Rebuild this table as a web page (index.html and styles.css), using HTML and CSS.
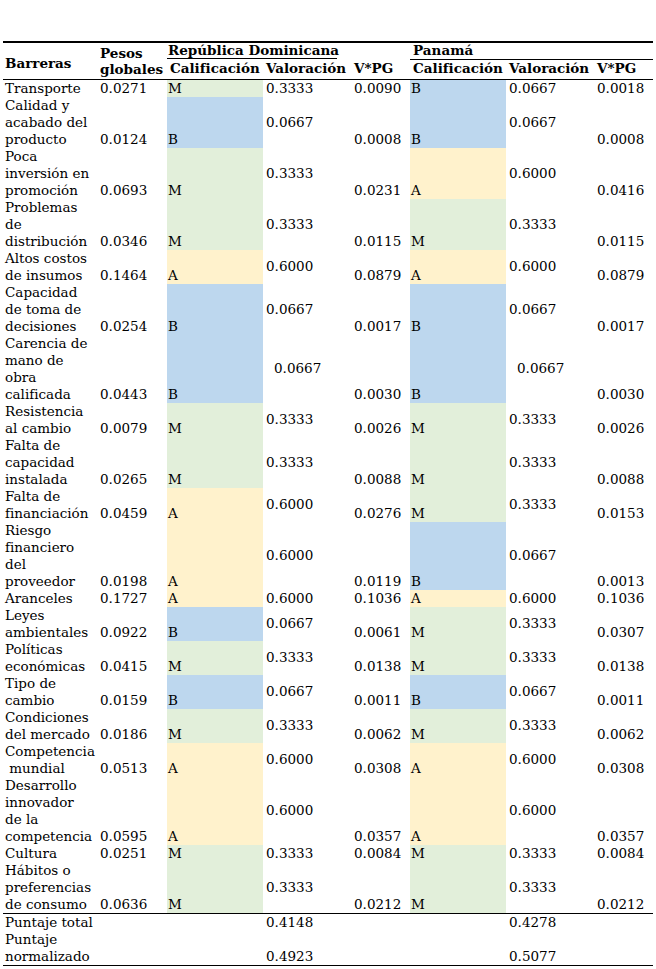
FILE: index.html
```html
<!DOCTYPE html>
<html lang="es">
<head>
<meta charset="utf-8">
<title>Barreras</title>
<link rel="stylesheet" href="styles.css">
</head>
<body>
<table class="tbl">
  <colgroup>
    <col class="c-bar"><col class="c-peso"><col class="c-cal"><col class="c-val"><col class="c-vpg"><col class="c-cal"><col class="c-val"><col class="c-vpg">
  </colgroup>
  <thead>
    <tr class="h1">
      <th rowspan="2" class="th-bar">Barreras</th>
      <th rowspan="2" class="th-peso">Pesos<br>globales</th>
      <th colspan="3" class="th-country"><span class="rd">República Dominicana</span></th>
      <th colspan="3" class="th-country pa">Panamá</th>
    </tr>
    <tr class="h2">
      <th class="th-cal">Calificación</th>
      <th>Valoración</th>
      <th>V*PG</th>
      <th class="th-cal">Calificación</th>
      <th>Valoración</th>
      <th>V*PG</th>
    </tr>
  </thead>
  <tbody>
    <tr><td class="bar">Transporte</td><td>0.0271</td><td class="cal m">M</td><td class="val">0.3333</td><td>0.0090</td><td class="cal b">B</td><td class="val">0.0667</td><td>0.0018</td></tr>
    <tr><td class="bar">Calidad y<br>acabado del<br>producto</td><td>0.0124</td><td class="cal b">B</td><td class="val">0.0667</td><td>0.0008</td><td class="cal b">B</td><td class="val">0.0667</td><td>0.0008</td></tr>
    <tr><td class="bar">Poca<br>inversión en<br>promoción</td><td>0.0693</td><td class="cal m">M</td><td class="val">0.3333</td><td>0.0231</td><td class="cal a">A</td><td class="val">0.6000</td><td>0.0416</td></tr>
    <tr><td class="bar">Problemas<br>de<br>distribución</td><td>0.0346</td><td class="cal m">M</td><td class="val">0.3333</td><td>0.0115</td><td class="cal m">M</td><td class="val">0.3333</td><td>0.0115</td></tr>
    <tr><td class="bar">Altos costos<br>de insumos</td><td>0.1464</td><td class="cal a">A</td><td class="val">0.6000</td><td>0.0879</td><td class="cal a">A</td><td class="val">0.6000</td><td>0.0879</td></tr>
    <tr><td class="bar">Capacidad<br>de toma de<br>decisiones</td><td>0.0254</td><td class="cal b">B</td><td class="val">0.0667</td><td>0.0017</td><td class="cal b">B</td><td class="val">0.0667</td><td>0.0017</td></tr>
    <tr><td class="bar">Carencia de<br>mano de<br>obra<br>calificada</td><td>0.0443</td><td class="cal b">B</td><td class="val indent">0.0667</td><td>0.0030</td><td class="cal b">B</td><td class="val indent">0.0667</td><td>0.0030</td></tr>
    <tr><td class="bar">Resistencia<br>al cambio</td><td>0.0079</td><td class="cal m">M</td><td class="val">0.3333</td><td>0.0026</td><td class="cal m">M</td><td class="val">0.3333</td><td>0.0026</td></tr>
    <tr><td class="bar">Falta de<br>capacidad<br>instalada</td><td>0.0265</td><td class="cal m">M</td><td class="val">0.3333</td><td>0.0088</td><td class="cal m">M</td><td class="val">0.3333</td><td>0.0088</td></tr>
    <tr><td class="bar">Falta de<br>financiación</td><td>0.0459</td><td class="cal a">A</td><td class="val">0.6000</td><td>0.0276</td><td class="cal m">M</td><td class="val">0.3333</td><td>0.0153</td></tr>
    <tr><td class="bar">Riesgo<br>financiero<br>del<br>proveedor</td><td>0.0198</td><td class="cal a">A</td><td class="val">0.6000</td><td>0.0119</td><td class="cal b">B</td><td class="val">0.0667</td><td>0.0013</td></tr>
    <tr><td class="bar">Aranceles</td><td>0.1727</td><td class="cal a">A</td><td class="val">0.6000</td><td>0.1036</td><td class="cal a">A</td><td class="val">0.6000</td><td>0.1036</td></tr>
    <tr><td class="bar">Leyes<br>ambientales</td><td>0.0922</td><td class="cal b">B</td><td class="val">0.0667</td><td>0.0061</td><td class="cal m">M</td><td class="val">0.3333</td><td>0.0307</td></tr>
    <tr><td class="bar">Políticas<br>económicas</td><td>0.0415</td><td class="cal m">M</td><td class="val">0.3333</td><td>0.0138</td><td class="cal m">M</td><td class="val">0.3333</td><td>0.0138</td></tr>
    <tr><td class="bar">Tipo de<br>cambio</td><td>0.0159</td><td class="cal b">B</td><td class="val">0.0667</td><td>0.0011</td><td class="cal b">B</td><td class="val">0.0667</td><td>0.0011</td></tr>
    <tr><td class="bar">Condiciones<br>del mercado</td><td>0.0186</td><td class="cal m">M</td><td class="val">0.3333</td><td>0.0062</td><td class="cal m">M</td><td class="val">0.3333</td><td>0.0062</td></tr>
    <tr><td class="bar">Competencia<br>&nbsp;mundial</td><td>0.0513</td><td class="cal a">A</td><td class="val">0.6000</td><td>0.0308</td><td class="cal a">A</td><td class="val">0.6000</td><td>0.0308</td></tr>
    <tr><td class="bar">Desarrollo<br>innovador<br>de la<br>competencia</td><td>0.0595</td><td class="cal a">A</td><td class="val">0.6000</td><td>0.0357</td><td class="cal a">A</td><td class="val">0.6000</td><td>0.0357</td></tr>
    <tr><td class="bar">Cultura</td><td>0.0251</td><td class="cal m">M</td><td class="val">0.3333</td><td>0.0084</td><td class="cal m">M</td><td class="val">0.3333</td><td>0.0084</td></tr>
    <tr class="last"><td class="bar">Hábitos o<br>preferencias<br>de consumo</td><td>0.0636</td><td class="cal m">M</td><td class="val">0.3333</td><td>0.0212</td><td class="cal m">M</td><td class="val">0.3333</td><td>0.0212</td></tr>
  </tbody>
  <tfoot>
    <tr><td class="bar">Puntaje total</td><td></td><td></td><td class="valb">0.4148</td><td></td><td></td><td class="valb">0.4278</td><td></td></tr>
    <tr class="end"><td class="bar">Puntaje<br>normalizado</td><td></td><td></td><td class="valb">0.4923</td><td></td><td></td><td class="valb">0.5077</td><td></td></tr>
  </tfoot>
</table>
</body>
</html>
```
FILE: styles.css
```css
html, body {
  margin: 0;
  padding: 0;
  background: #fff;
}
body {
  padding: 41px 3px 0 3px;
  font-family: "DejaVu Serif", serif;
  font-size: 13.5px;
  color: #000;
}
.tbl {
  border-collapse: collapse;
  border-spacing: 0;
  table-layout: fixed;
  width: 650px;
  border-top: 2px solid #000;
}
.c-bar { width: 95px; }
.c-peso { width: 69px; }
.c-cal { width: 96px; }
.c-val { width: 89px; }
.c-vpg { width: 58px; }

th, td {
  padding: 0 0 0 2px;
  line-height: 17px;
  white-space: nowrap;
  text-align: left;
  vertical-align: bottom;
  overflow: visible;
}
th {
  font-weight: bold;
}
.h1 th {
  line-height: 16px;
}
.th-bar {
  vertical-align: middle;
  padding-top: 4px;
}
.th-peso {
  padding-bottom: 2px;
  border-bottom: 1px solid #000;
}
.th-country {
  padding-left: 1px;
  vertical-align: top;
}
.rd {
  display: block;
  width: 169px;
  padding-left: 1px;
  margin-left: -1px;
  border-bottom: 1px solid #000;
  line-height: 15px;
}
.th-country.pa {
  padding-left: 3px;
  border-bottom: 1px solid #000;
  line-height: 15px;
}
.h2 th {
  padding-bottom: 2px;
  border-bottom: 1px solid #000;
}
.h2 .th-cal {
  padding-left: 3px;
}
.h2 th:nth-child(2), .h2 th:nth-child(5) {
  padding-left: 3px;
}
.h1 .th-bar, .th-peso {
  border-bottom: 1px solid #000;
}

.bar {
  vertical-align: top;
}
.cal {
  padding-left: 1px;
}
.m { background: #e2efda; }
.b { background: #bdd7ee; }
.a { background: #fff2cc; }
.val {
  vertical-align: middle;
  padding-left: 3px;
}
.val.indent {
  padding-left: 11px;
}
.valb {
  padding-left: 3px;
}
.last td {
  border-bottom: 1px solid #000;
}
.end td {
  border-bottom: 1px solid #000;
}
```
